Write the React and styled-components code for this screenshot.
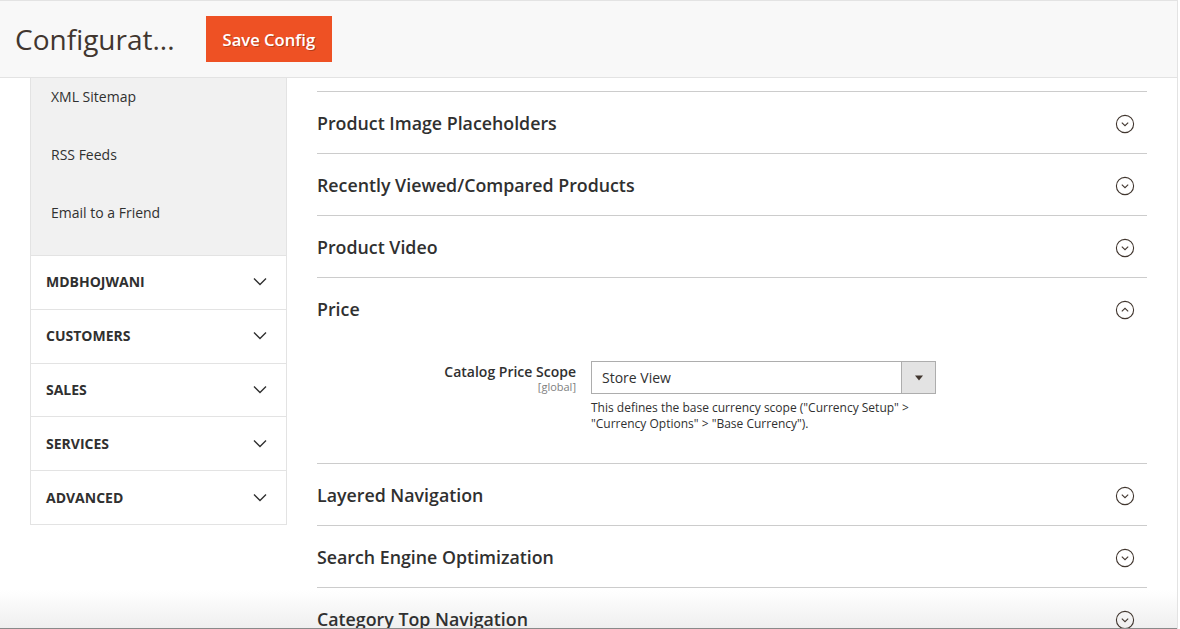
import React from "react";
import styled, { createGlobalStyle } from "styled-components";

const Global = createGlobalStyle`
  html, body { margin: 0; padding: 0; overflow: hidden; background: #fff; }
  body { font-family: "Open Sans", "Liberation Sans", sans-serif; color: #303030; }
  * { box-sizing: border-box; }
`;

const Page = styled.div`
  width: 1178px;
  height: 629px;
  border-right: 1px solid #e3e3e3;
  position: relative;
  overflow: hidden;
  background: linear-gradient(to bottom, #ffffff 0, #ffffff 590px, #efefef 628px);
`;

const Header = styled.header`
  height: 78px;
  background: #f8f8f8;
  border-top: 1px solid #e3e3e3;
  border-bottom: 1px solid #e3e3e3;
  display: flex;
  align-items: center;
  padding: 0 15px;
  gap: 31px;
`;

const Title = styled.h1`
  margin: 0;
  font-size: 28px;
  font-weight: 400;
  color: #41362f;
  line-height: 1;
`;

const PrimaryButton = styled.button`
  height: 46px;
  padding: 0 17px;
  border: none;
  background: #ee5124;
  color: #fff;
  font-family: "Open Sans", "Liberation Sans", sans-serif;
  font-size: 16.6px;
  font-weight: 600;
  text-shadow: 1px 1px 0 rgba(0, 0, 0, 0.25);
  cursor: pointer;
`;

const Body = styled.div`
  display: grid;
  grid-template-columns: 257px 1fr;
  gap: 30px;
  padding: 0 30px;
  align-items: start;
`;

const Sidebar = styled.aside`
  border: 1px solid #e3e3e3;
  border-top: none;
  background: #fff;
`;

const SubList = styled.ul`
  list-style: none;
  margin: 0;
  padding: 0 0 3px;
  background: #f1f1f1;
`;

const SubItem = styled.li`
  height: 58px;
  padding: 9px 0 0 20px;
  font-size: 14px;
  line-height: 20px;
  color: #303030;
`;

const NavGroup = styled.div`
  height: 53.8px;
  border-top: 1px solid #e3e3e3;
  display: flex;
  align-items: center;
  justify-content: space-between;
  padding: 0 19px 1px 15px;
  font-size: 14px;
  font-weight: 700;
  text-transform: uppercase;
  color: #303030;
`;

const Main = styled.main`
  padding-top: 13px;
`;

const Section = styled.section`
  border-top: 1px solid #cccccc;
`;

const SectionHead = styled.div`
  height: 61px;
  display: flex;
  align-items: center;
  justify-content: space-between;
  padding-right: 12px;
`;

const SectionTitle = styled.span`
  font-size: 17.8px;
  font-weight: 600;
  color: #303030;
`;

const IconWrap = styled.span`
  display: flex;
  padding-top: 3px;
`;

const SectionBody = styled.div`
  padding: 22px 0 31px;
`;

const FieldRow = styled.div`
  display: grid;
  grid-template-columns: 259px 345px;
  column-gap: 15px;
  align-items: start;
`;

const LabelCol = styled.div`
  text-align: right;
  padding-top: 2px;
`;

const Label = styled.div`
  font-size: 14px;
  font-weight: 600;
  line-height: 17px;
  color: #303030;
`;

const Scope = styled.div`
  font-size: 11px;
  line-height: 13px;
  color: #808080;
`;

const Select = styled.div`
  height: 33px;
  border: 1px solid #adadad;
  display: flex;
  background: #fff;
`;

const SelectValue = styled.span`
  flex: 1;
  padding-left: 10px;
  font-size: 14px;
  line-height: 31px;
  color: #303030;
`;

const SelectArrow = styled.span`
  width: 34px;
  background: #e3e3e3;
  border-left: 1px solid #adadad;
  display: flex;
  align-items: center;
  justify-content: center;
`;

const Note = styled.p`
  grid-column: 2;
  margin: 6px 0 0;
  font-size: 12px;
  line-height: 16px;
  color: #303030;
`;

const BottomLine = styled.div`
  position: absolute;
  left: 0;
  right: 0;
  bottom: 0;
  height: 1px;
  background: #8a8a8a;
`;

const Chevron = () => (
  <svg width="14" height="9" viewBox="0 0 14 9">
    <path d="M1 1.5 L7 7.5 L13 1.5" fill="none" stroke="#303030" strokeWidth="1.4" />
  </svg>
);

const CircleToggle = ({ open }) => (
  <svg width="20" height="20" viewBox="0 0 20 20">
    <circle cx="10" cy="10" r="8.6" fill="none" stroke="#41362f" strokeWidth="1.1" />
    {open ? (
      <path d="M6.8 11.3 L10 8.3 L13.2 11.3" fill="none" stroke="#41362f" strokeWidth="1.1" />
    ) : (
      <path d="M6.8 8.7 L10 11.7 L13.2 8.7" fill="none" stroke="#41362f" strokeWidth="1.1" />
    )}
  </svg>
);

const subItems = ["XML Sitemap", "RSS Feeds", "Email to a Friend"];
const groups = ["MDBHOJWANI", "Customers", "Sales", "Services", "Advanced"];
const before = ["Product Image Placeholders", "Recently Viewed/Compared Products", "Product Video"];
const after = ["Layered Navigation", "Search Engine Optimization", "Category Top Navigation"];

export default function App() {
  return (
    <>
      <Global />
      <Page>
        <Header>
          <Title>Configurat...</Title>
          <PrimaryButton>Save Config</PrimaryButton>
        </Header>
        <Body>
          <Sidebar>
            <SubList>
              {subItems.map((s) => (
                <SubItem key={s}>{s}</SubItem>
              ))}
            </SubList>
            {groups.map((g) => (
              <NavGroup key={g}>
                <span>{g}</span>
                <Chevron />
              </NavGroup>
            ))}
          </Sidebar>
          <Main>
            {before.map((t) => (
              <Section key={t}>
                <SectionHead>
                  <SectionTitle>{t}</SectionTitle>
                  <IconWrap><CircleToggle /></IconWrap>
                </SectionHead>
              </Section>
            ))}
            <Section>
              <SectionHead>
                <SectionTitle>Price</SectionTitle>
                <IconWrap><CircleToggle open /></IconWrap>
              </SectionHead>
              <SectionBody>
                <FieldRow>
                  <LabelCol>
                    <Label>Catalog Price Scope</Label>
                    <Scope>[global]</Scope>
                  </LabelCol>
                  <Select>
                    <SelectValue>Store View</SelectValue>
                    <SelectArrow>
                      <svg width="10" height="6" viewBox="0 0 10 6">
                        <path d="M1 0.5 H9 L5 5.5 Z" fill="#41362f" />
                      </svg>
                    </SelectArrow>
                  </Select>
                  <Note>
                    This defines the base currency scope ("Currency Setup" &gt;
                    <br />
                    "Currency Options" &gt; "Base Currency").
                  </Note>
                </FieldRow>
              </SectionBody>
            </Section>
            {after.map((t) => (
              <Section key={t}>
                <SectionHead>
                  <SectionTitle>{t}</SectionTitle>
                  <IconWrap><CircleToggle /></IconWrap>
                </SectionHead>
              </Section>
            ))}
          </Main>
        </Body>
        <BottomLine />
      </Page>
    </>
  );
}
